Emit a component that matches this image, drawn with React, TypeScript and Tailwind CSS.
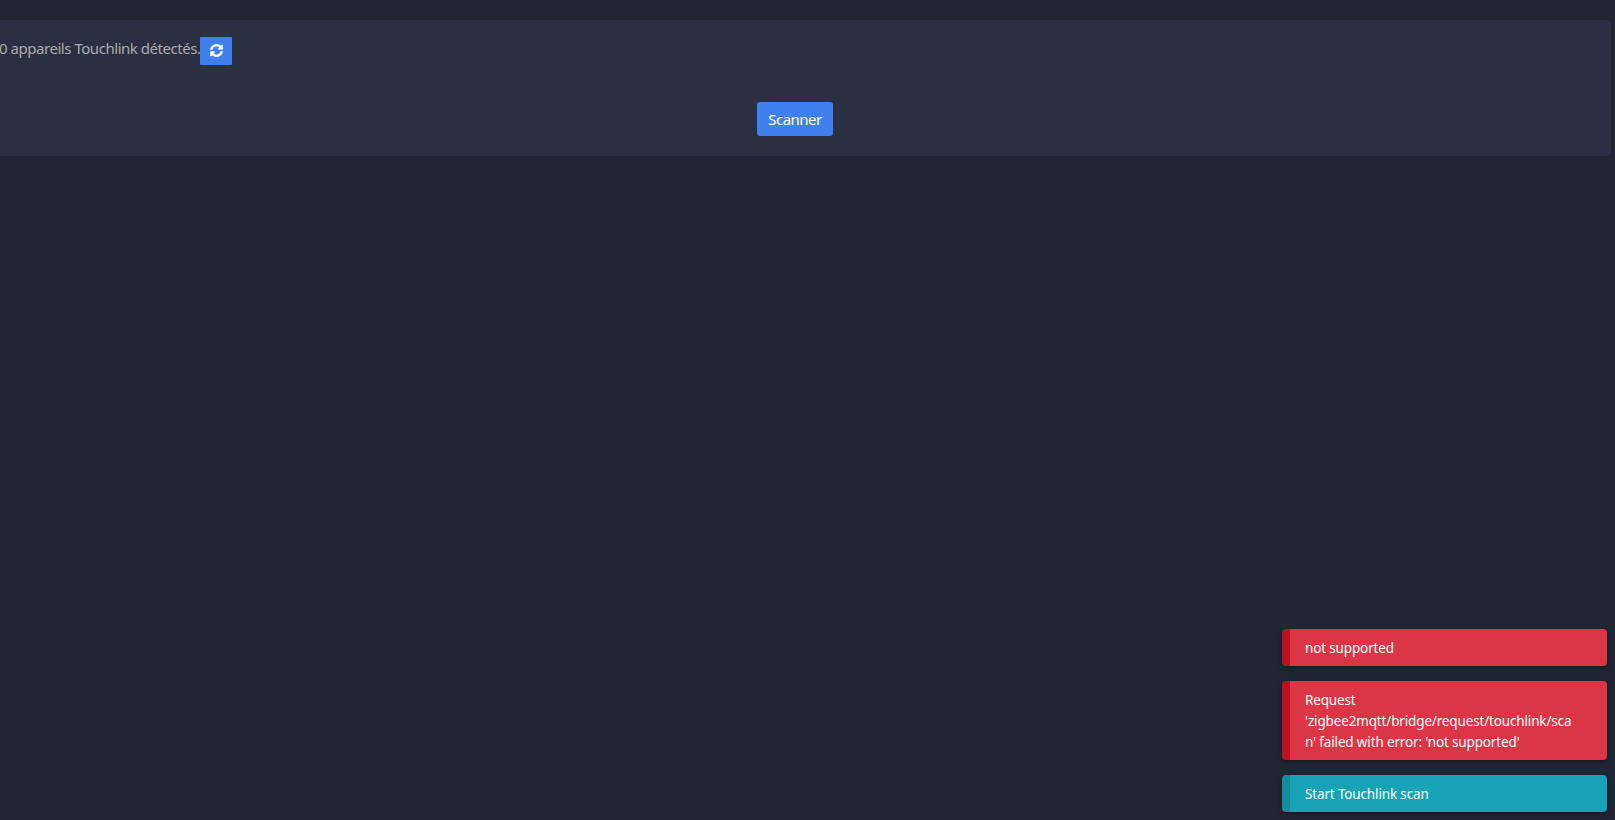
import { FaSyncAlt } from 'react-icons/fa';
import clsx from 'clsx';

type Notification = {
  id: number;
  kind: 'error' | 'info';
  lines: string[];
};

const notifications: Notification[] = [
  { id: 1, kind: 'error', lines: ['not supported'] },
  {
    id: 2,
    kind: 'error',
    lines: ['Request', "'zigbee2mqtt/bridge/request/touchlink/sca", "n' failed with error: 'not supported'"],
  },
  { id: 3, kind: 'info', lines: ['Start Touchlink scan'] },
];

function Toast({ kind, lines }: Notification) {
  return (
    <div
      className={clsx(
        'rounded border-l-8 pb-[7px] pl-[15px] pr-4 pt-[9px] text-[13.5px] leading-[21px] tracking-[-0.15px] text-white shadow-[0_2px_5px_rgba(0,0,0,0.35)]',
        kind === 'error' ? 'border-[#bd111f] bg-[#dc3545]' : 'border-[#138b9f] bg-[#17a2b8]'
      )}
    >
      {lines.map((line) => (
        <span key={line} className="block w-fit whitespace-nowrap">{line}</span>
      ))}
    </div>
  );
}

export default function App() {
  return (
    <main className="relative h-[820px] overflow-hidden bg-[#202633] pt-5 font-['Noto_Sans','Open_Sans',sans-serif]">
      {/* Touchlink card */}
      <div className="mr-1 h-[136px] rounded-r bg-[#2a3042] pt-4">
        <div className="flex h-[29px] items-start">
          <span className="-ml-px w-[201px] whitespace-nowrap text-[15px] leading-6 tracking-[-0.46px] text-[#aaaaaa]">
            0 appareils Touchlink détectés.
          </span>
          <button className="mt-px flex h-7 w-8 items-center justify-center rounded-[1px] bg-[#4080ee] pb-px text-white">
            <FaSyncAlt className="h-[13px] w-[13px] stroke-white stroke-[12]" />
          </button>
        </div>
        <div className="mt-[37px] flex justify-center pr-[21px]">
          <button className="h-[34px] w-[76px] rounded-[3px] bg-[#4080ee] text-[15px] leading-6 tracking-[-0.5px] text-white">
            Scanner
          </button>
        </div>
      </div>

      {/* Notifications */}
      <div className="absolute bottom-2 right-2 flex w-[325px] flex-col gap-[15px]">
        {notifications.map((n) => (
          <Toast key={n.id} {...n} />
        ))}
      </div>
    </main>
  );
}
